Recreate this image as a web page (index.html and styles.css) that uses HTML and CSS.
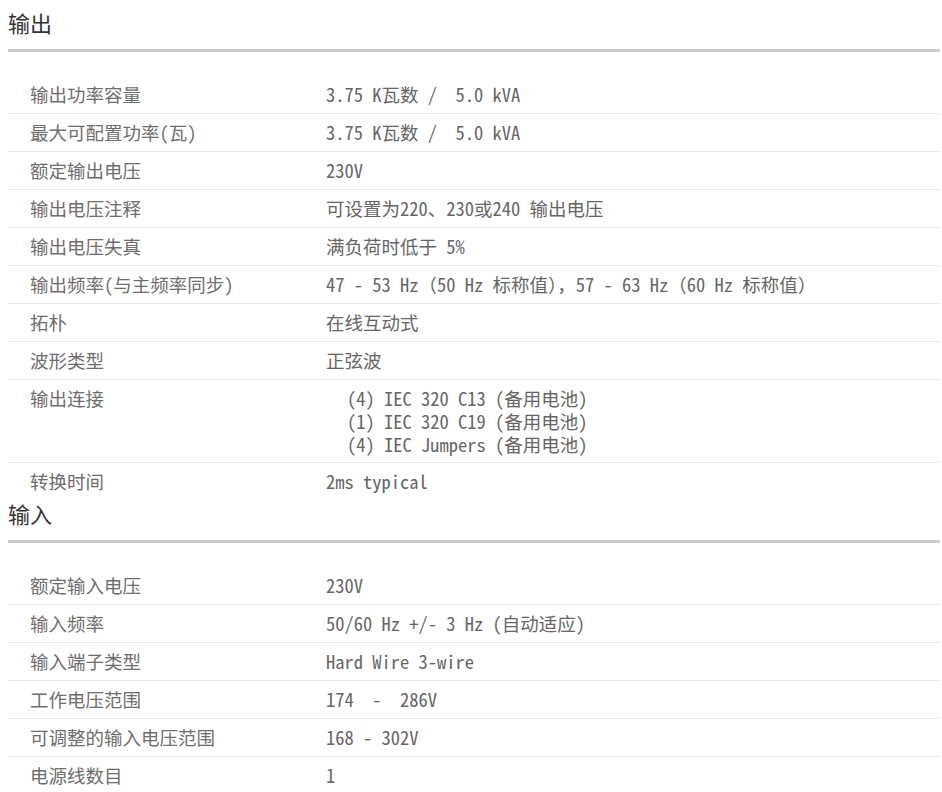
FILE: index.html
```html
<!DOCTYPE html>
<html lang="zh-CN">
<head>
<meta charset="utf-8">
<title>规格</title>
<link rel="stylesheet" href="styles.css">
</head>
<body>
<section class="spec">
  <h2 class="spec-title">输出</h2>
  <div class="spec-table">
    <div class="row"><div class="label">输出功率容量</div><div class="value">3.75 K瓦数 /  5.0 kVA</div></div>
    <div class="row"><div class="label">最大可配置功率(瓦)</div><div class="value">3.75 K瓦数 /  5.0 kVA</div></div>
    <div class="row"><div class="label">额定输出电压</div><div class="value">230V</div></div>
    <div class="row"><div class="label">输出电压注释</div><div class="value">可设置为220、230或240 输出电压</div></div>
    <div class="row"><div class="label">输出电压失真</div><div class="value">满负荷时低于 5%</div></div>
    <div class="row"><div class="label">输出频率(与主频率同步)</div><div class="value">47 - 53 Hz（50 Hz 标称值），57 - 63 Hz（60 Hz 标称值）</div></div>
    <div class="row"><div class="label">拓朴</div><div class="value">在线互动式</div></div>
    <div class="row"><div class="label">波形类型</div><div class="value">正弦波</div></div>
    <div class="row row-list"><div class="label">输出连接</div><div class="value-list">
      <ul class="conn">
        <li>(4) IEC 320 C13 (备用电池)</li>
        <li>(1) IEC 320 C19 (备用电池)</li>
        <li>(4) IEC Jumpers (备用电池)</li>
      </ul>
    </div></div>
    <div class="row"><div class="label">转换时间</div><div class="value">2ms typical</div></div>
  </div>
</section>
<section class="spec">
  <h2 class="spec-title">输入</h2>
  <div class="spec-table">
    <div class="row"><div class="label">额定输入电压</div><div class="value">230V</div></div>
    <div class="row"><div class="label">输入频率</div><div class="value">50/60 Hz +/- 3 Hz (自动适应)</div></div>
    <div class="row"><div class="label">输入端子类型</div><div class="value">Hard Wire 3-wire</div></div>
    <div class="row"><div class="label">工作电压范围</div><div class="value">174  -  286V</div></div>
    <div class="row"><div class="label">可调整的输入电压范围</div><div class="value">168 - 302V</div></div>
    <div class="row"><div class="label">电源线数目</div><div class="value">1</div></div>
  </div>
</section>
</body>
</html>
```
FILE: styles.css
```css
body {
  margin: 8px 2px 8px 8px;
  background: #fff;
  font-family: "Noto Sans Mono CJK SC", "Liberation Mono", "Noto Sans CJK SC", monospace;
  color: #666;
}

.spec-title {
  margin: 0 0 24px;
  padding-bottom: 13px;
  border-bottom: 3px solid #cccccc;
  font-family: "Noto Sans CJK SC", sans-serif;
  font-size: 22px;
  line-height: 28px;
  font-weight: normal;
  color: #333;
}

.spec-table {
  display: flex;
  flex-direction: column;
}

.row {
  display: grid;
  grid-template-columns: 296px 1fr;
  padding: 7px 0;
  border-bottom: 1px solid #e6e6e6;
  font-size: 18.5px;
  line-height: 23px;
}

.row-list {
  padding-bottom: 6px;
}

.row:last-child {
  border-bottom: none;
  padding-bottom: 6px;
}

.label {
  padding-left: 22px;
  color: #6e6e6e;
  white-space: nowrap;
}

.value {
  padding-left: 22px;
  color: #666;
  white-space: pre;
}

.value-list {
  padding-left: 22px;
  color: #666;
}

.conn {
  margin: 0;
  padding: 0 0 0 21px;
  list-style: none;
}

.conn li {
  white-space: pre;
}
```
